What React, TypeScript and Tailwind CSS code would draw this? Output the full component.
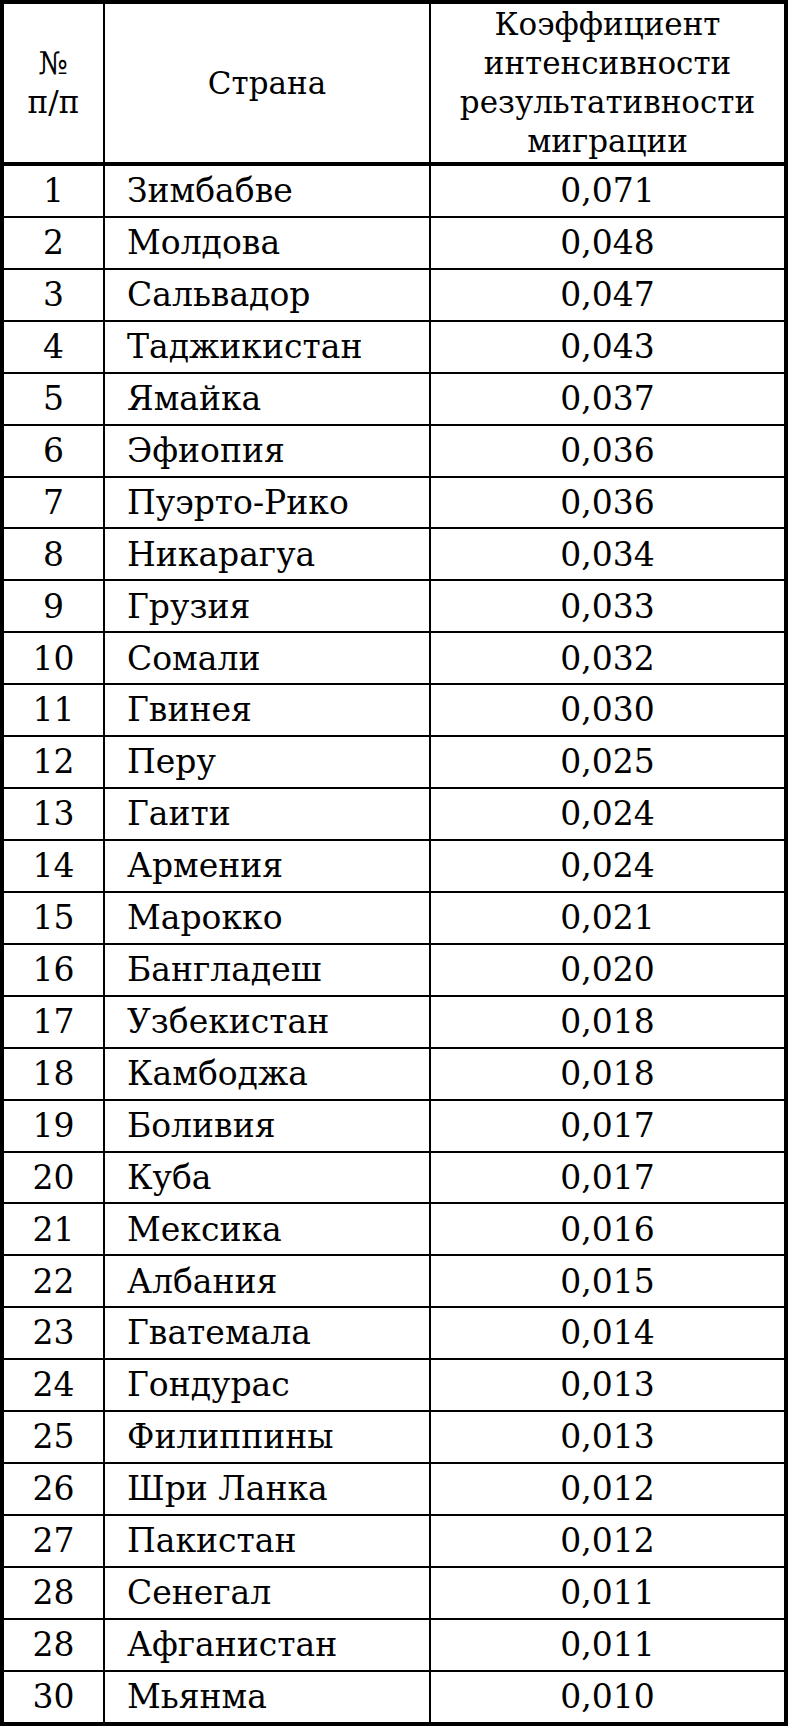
const rows: [string, string, string][] = [
  ["1", "Зимбабве", "0,071"],
  ["2", "Молдова", "0,048"],
  ["3", "Сальвадор", "0,047"],
  ["4", "Таджикистан", "0,043"],
  ["5", "Ямайка", "0,037"],
  ["6", "Эфиопия", "0,036"],
  ["7", "Пуэрто-Рико", "0,036"],
  ["8", "Никарагуа", "0,034"],
  ["9", "Грузия", "0,033"],
  ["10", "Сомали", "0,032"],
  ["11", "Гвинея", "0,030"],
  ["12", "Перу", "0,025"],
  ["13", "Гаити", "0,024"],
  ["14", "Армения", "0,024"],
  ["15", "Марокко", "0,021"],
  ["16", "Бангладеш", "0,020"],
  ["17", "Узбекистан", "0,018"],
  ["18", "Камбоджа", "0,018"],
  ["19", "Боливия", "0,017"],
  ["20", "Куба", "0,017"],
  ["21", "Мексика", "0,016"],
  ["22", "Албания", "0,015"],
  ["23", "Гватемала", "0,014"],
  ["24", "Гондурас", "0,013"],
  ["25", "Филиппины", "0,013"],
  ["26", "Шри Ланка", "0,012"],
  ["27", "Пакистан", "0,012"],
  ["28", "Сенегал", "0,011"],
  ["28", "Афганистан", "0,011"],
  ["30", "Мьянма", "0,010"],
];

export default function App() {
  return (
    <div className="w-[788px] bg-white text-black font-['DejaVu_Serif','Liberation_Serif',serif]">
      <div className="border-4 border-black">
        {/* header */}
        <div className="grid grid-cols-[99px_326px_1fr] h-[162px] border-b-4 border-black text-[31px] leading-[39px]">
          <div className="flex flex-col items-center justify-center text-center">
            <span>№</span>
            <span>п/п</span>
          </div>
          <div className="flex items-center justify-center border-l-2 border-black">Страна</div>
          <div className="flex flex-col items-center justify-center border-l-2 border-black text-center">
            <span>Коэффициент</span>
            <span>интенсивности</span>
            <span>результативности</span>
            <span>миграции</span>
          </div>
        </div>

        {rows.map(([n, country, k], i) => (
          <div
            key={i}
            className={
              i === 0
                ? "grid grid-cols-[99px_326px_1fr] h-[49.93px] text-[33px]"
                : "grid grid-cols-[99px_326px_1fr] h-[51.93px] border-t-2 border-black text-[33px]"
            }
          >
            <div className="flex items-center justify-center">{n}</div>
            <div className="flex items-center border-l-2 border-black pl-[22px]">{country}</div>
            <div className="flex items-center justify-center border-l-2 border-black">{k}</div>
          </div>
        ))}
      </div>
    </div>
  );
}
